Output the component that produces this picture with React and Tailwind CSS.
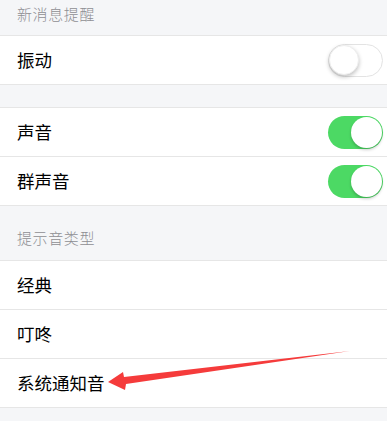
import React from "react";

function Toggle({ on }) {
  return on ? (
    <div className="w-[55px] h-[33px] rounded-full bg-[#4cd964] relative">
      <div className="absolute right-[1px] top-[1px] w-[31px] h-[31px] rounded-full bg-white shadow-[0_2px_3px_rgba(0,0,0,0.2)]" />
    </div>
  ) : (
    <div className="w-[55px] h-[33px] rounded-full bg-white border-[1.5px] border-[#e3e3e3] relative">
      <div className="absolute left-0 top-0 w-[30px] h-[30px] rounded-full bg-white shadow-[0_2px_4px_rgba(0,0,0,0.25)] border border-[#eee]" />
    </div>
  );
}

function Row({ label, toggle }) {
  return (
    <div className="h-[49px] bg-white border-b border-[#e6e6e6] flex items-center justify-between pl-[17px] pr-[4px]">
      <span className="text-[17.5px] text-black">{label}</span>
      {toggle !== undefined && <Toggle on={toggle} />}
    </div>
  );
}

export default function App() {
  return (
    <div
      className="relative w-[387px] h-[421px] bg-[#f5f6f8] overflow-hidden"
      style={{ fontFamily: '"Noto Sans CJK SC", "Noto Sans", sans-serif' }}
    >
      <div className="h-[36px] border-b border-[#e6e6e6] flex items-center pl-[17px] pb-[7px]">
        <span className="text-[15px] text-[#8e8e93] tracking-[0.6px] font-light">新消息提醒</span>
      </div>
      <Row label="振动" toggle={false} />
      <div className="h-[23px] border-b border-[#e6e6e6]" />
      <Row label="声音" toggle={true} />
      <Row label="群声音" toggle={true} />
      <div className="h-[55px] border-b border-[#e6e6e6] flex items-end pl-[17px] pb-[11px]">
        <span className="text-[15px] text-[#8e8e93] tracking-[0.6px] font-light">提示音类型</span>
      </div>
      <Row label="经典" />
      <Row label="叮咚" />
      <Row label="系统通知音" />

      {/* red annotation arrow */}
      <svg className="absolute left-0 top-0" width="387" height="421" viewBox="0 0 387 421">
        <polygon
          points="108,382 123,372 124,377 350,351 126,384 125,390"
          fill="#f53b3b"
        />
      </svg>
    </div>
  );
}
